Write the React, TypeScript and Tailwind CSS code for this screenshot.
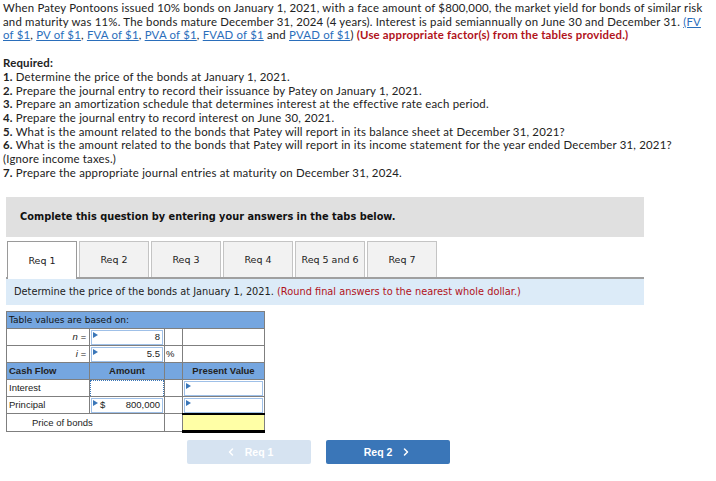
import React from 'react';
import { ChevronLeft, ChevronRight } from 'lucide-react';

const topFont = { fontFamily: 'Lato, "Open Sans", sans-serif' };
const verdana = { fontFamily: '"DejaVu Sans", Verdana, sans-serif' };
const arial = { fontFamily: '"Liberation Sans", Arial, sans-serif' };

function Marker() {
  return (
    <span className="absolute left-[1px] top-[1px] w-0 h-0 border-t-[3px] border-b-[3px] border-l-[5px] border-t-transparent border-b-transparent border-l-[#3a76b8]" />
  );
}

const tabs = ['Req 1', 'Req 2', 'Req 3', 'Req 4', 'Req 5 and 6', 'Req 7'];

export default function App() {
  const links = ['PV of $1', 'FVA of $1', 'PVA of $1'];
  return (
    <div className="w-[716px] h-[481px] bg-white text-[#222] overflow-hidden">
      <div className="px-[3px] pt-[1px] text-[11.4px] leading-[13.7px] tracking-[0.2px]" style={topFont}>
        <p>
          When Patey Pontoons issued 10% bonds on January 1, 2021, with a face amount of $800,000, the market yield for
          bonds of similar risk and maturity was 11%. The bonds mature December 31, 2024 (4 years). Interest is paid
          semiannually on June 30 and December 31. <a className="text-[#2a6ebb] underline">(FV of $1</a>,{' '}
          {links.map((l) => (
            <React.Fragment key={l}>
              <a className="text-[#2a6ebb] underline">{l}</a>,{' '}
            </React.Fragment>
          ))}
          <a className="text-[#2a6ebb] underline">FVAD of $1</a> and{' '}
          <a className="text-[#2a6ebb] underline">PVAD of $1</a>)
          <span className="font-bold text-[#b1121a]"> (Use appropriate factor(s) from the tables provided.)</span>
        </p>

        <div className="mt-[14px]">
          <p className="font-bold">Required:</p>
          <p><b>1.</b> Determine the price of the bonds at January 1, 2021.</p>
          <p><b>2.</b> Prepare the journal entry to record their issuance by Patey on January 1, 2021.</p>
          <p><b>3.</b> Prepare an amortization schedule that determines interest at the effective rate each period.</p>
          <p><b>4.</b> Prepare the journal entry to record interest on June 30, 2021.</p>
          <p><b>5.</b> What is the amount related to the bonds that Patey will report in its balance sheet at December 31, 2021?</p>
          <p><b>6.</b> What is the amount related to the bonds that Patey will report in its income statement for the year ended December 31, 2021?</p>
          <p>(Ignore income taxes.)</p>
          <p><b>7.</b> Prepare the appropriate journal entries at maturity on December 31, 2024.</p>
        </div>
      </div>

      <div className="mx-[6px] w-[638px]" style={verdana}>
        <div className="mt-[18px] h-[40px] bg-[#e0e0e0] flex items-center pl-[14px] text-[9.8px] font-bold text-[#111]">
          Complete this question by entering your answers in the tabs below.
        </div>

        <div className="mt-[5px] flex gap-[2px] pl-[1px] border-b-[2px] border-[#a0a0a0] h-[37px] items-end">
          {tabs.map((t, i) => (
            <div
              key={t}
              className={
                i === 0
                  ? 'w-[70px] h-[38px] -mb-[2px] bg-white border border-b-0 border-[#9a9a9a] flex items-center justify-center text-[9.5px]'
                  : 'w-[70px] h-[36px] bg-[#f2f2f2] border border-b-0 border-[#c4c4c4] flex items-center justify-center text-[9.5px]'
              }
            >
              {t}
            </div>
          ))}
        </div>

        <div className="h-[26px] bg-[#dcebf8] flex items-center pl-[8px] text-[9.8px] text-[#222]">
          Determine the price of the bonds at January 1, 2021.&nbsp;
          <span className="text-[#b1121a]">(Round final answers to the nearest whole dollar.)</span>
        </div>

        <table className="mt-[6px] border-collapse text-[9.5px]" style={arial}>
          <colgroup>
            <col className="w-[83px]" />
            <col className="w-[75px]" />
            <col className="w-[18px]" />
            <col className="w-[82px]" />
          </colgroup>
          <tbody>
            <tr className="h-[17px] bg-[#75a6e0]">
              <td colSpan={4} className="border border-[#7f7f7f] px-[2px] text-[9px] text-[#111]" style={verdana}>
                Table values are based on:
              </td>
            </tr>
            <tr className="h-[17px]">
              <td className="border border-[#7f7f7f] text-right pr-[3px] italic">n =</td>
              <td className="border border-[#7f7f7f] p-0">
                <div className="relative h-[15px] mx-[1px] border-[1.5px] border-[#9fc0e8] text-right pr-[2px] leading-[12px]">
                  <Marker />8
                </div>
              </td>
              <td className="border border-[#7f7f7f]" />
              <td className="border border-[#7f7f7f]" />
            </tr>
            <tr className="h-[17px]">
              <td className="border border-[#7f7f7f] text-right pr-[3px] italic">i =</td>
              <td className="border border-[#7f7f7f] p-0">
                <div className="relative h-[15px] mx-[1px] border-[1.5px] border-[#9fc0e8] text-right pr-[2px] leading-[12px]">
                  <Marker />5.5
                </div>
              </td>
              <td className="border border-[#7f7f7f] pl-[1px]">%</td>
              <td className="border border-[#7f7f7f]" />
            </tr>
            <tr className="h-[17px] bg-[#75a6e0] font-bold">
              <td className="border border-[#7f7f7f] px-[2px]">Cash Flow</td>
              <td className="border border-[#7f7f7f] text-center">Amount</td>
              <td className="border border-[#7f7f7f]" />
              <td className="border border-[#7f7f7f] text-center">Present Value</td>
            </tr>
            <tr className="h-[17px]">
              <td className="border border-[#7f7f7f] px-[2px]">Interest</td>
              <td className="border border-[#7f7f7f] p-0">
                <div className="h-[16px] border border-dotted border-[#3a76b8] border-b-0" />
              </td>
              <td className="border border-[#7f7f7f]" />
              <td className="border border-[#7f7f7f] p-0">
                <div className="relative h-[15px] mx-[1px] border-[1.5px] border-[#9fc0e8]">
                  <Marker />
                </div>
              </td>
            </tr>
            <tr className="h-[17px]">
              <td className="border border-[#7f7f7f] px-[2px]">Principal</td>
              <td className="border border-[#7f7f7f] p-0">
                <div className="relative h-[15px] mx-[1px] border-[1.5px] border-[#9fc0e8] flex justify-between pl-[8px] pr-[2px] leading-[12px]">
                  <Marker />
                  <span>$</span>
                  <span>800,000</span>
                </div>
              </td>
              <td className="border border-[#7f7f7f]" />
              <td className="border border-[#7f7f7f] p-0">
                <div className="relative h-[15px] mx-[1px] border-[1.5px] border-[#9fc0e8]">
                  <Marker />
                </div>
              </td>
            </tr>
            <tr className="h-[18px]">
              <td colSpan={2} className="border border-[#7f7f7f] pl-[25px]">Price of bonds</td>
              <td className="border border-[#7f7f7f]" />
              <td className="border border-[#7f7f7f] border-b-[3px] border-b-black border-t-[2px] border-t-black bg-[#ffffa6]" />
            </tr>
          </tbody>
        </table>

        <div className="mt-[7px] flex gap-[15px] pl-[181px]" style={arial}>
          <div className="w-[124px] h-[24px] rounded-[2px] bg-[#d6e3f1] text-white font-bold text-[10.5px] flex items-center justify-center gap-[8px]">
            <ChevronLeft size={12} strokeWidth={3} />
            Req 1
          </div>
          <div className="w-[124px] h-[24px] rounded-[2px] bg-[#3a76b8] text-white font-bold text-[10.5px] flex items-center justify-center gap-[8px]">
            Req 2
            <ChevronRight size={12} strokeWidth={3} />
          </div>
        </div>
      </div>
    </div>
  );
}
